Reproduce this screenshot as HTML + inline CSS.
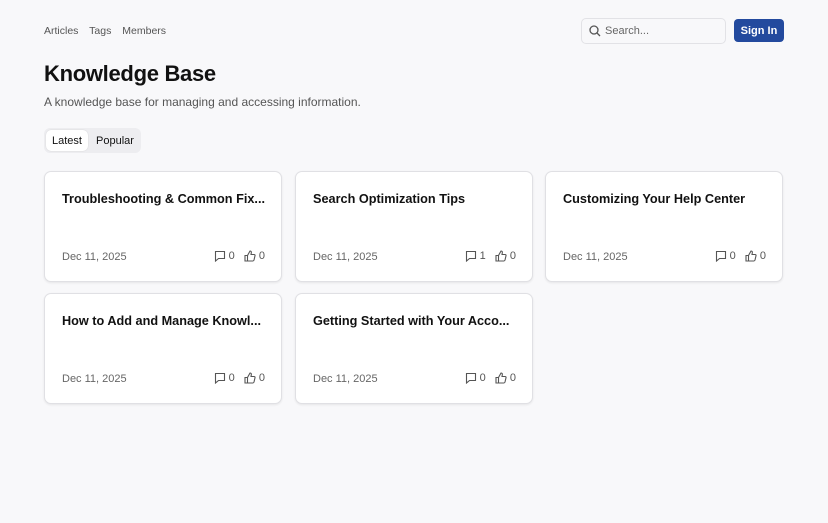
<!DOCTYPE html>
<html><head><style>
*{box-sizing:border-box;margin:0;padding:0}
body{width:828px;height:523px;background:#f8f8fa;font-family:"Liberation Sans",sans-serif;color:#111;position:relative;overflow:hidden}
.nav{position:absolute;top:25px;left:44px;font-size:10.5px;color:#555}
.nav span{margin-right:8px}
.search{position:absolute;left:581px;top:18px;width:145px;height:26px;border:1px solid #e2e2e6;border-radius:5px;background:#f8f8fa;font-size:11px;color:#666;padding:6px 0 0 23px}
.search svg{position:absolute;left:7px;top:6px}
.btn{position:absolute;left:734px;top:19px;width:50px;height:23px;background:#234a9e;border-radius:4px;color:#fff;font-size:11px;font-weight:bold;display:flex;align-items:center;justify-content:center}
h1{position:absolute;left:44px;top:61px;font-size:22px;font-weight:bold;letter-spacing:-0.3px}
.sub{position:absolute;left:44px;top:95px;font-size:12px;color:#555}
.tabs{position:absolute;left:44px;top:128px;width:97px;height:25px;background:#ededf0;border-radius:6px}
.tab{position:absolute;top:2px;height:21px;font-size:11px;line-height:22px;padding:0 6px}
.tab.a{left:2px;background:#fff;border-radius:5px;box-shadow:0 0 1px rgba(0,0,0,.2)}
.card{position:absolute;width:238px;height:111px;background:#fff;border:1px solid #e0e0e4;border-radius:7px;box-shadow:0 1px 2px rgba(0,0,0,.08)}
.t{position:absolute;left:17px;top:20px;font-size:12.7px;font-weight:bold;white-space:nowrap}
.d{position:absolute;left:17px;top:79px;font-size:11px;color:#666}
.m{position:absolute;right:16px;top:78px;font-size:11px;color:#555;display:flex;align-items:center;gap:3px}
.m svg{display:block}
</style></head><body>
<div class="nav"><span>Articles</span> <span>Tags</span> <span>Members</span></div>
<div class="search"><svg width="12" height="12" viewBox="0 0 12 12" fill="none" stroke="#555" stroke-width="1.3"><circle cx="5" cy="5" r="4"/><path d="M8 8l3 3"/></svg>Search...</div>
<div class="btn">Sign In</div>
<h1>Knowledge Base</h1>
<div class="sub">A knowledge base for managing and accessing information.</div>
<div class="tabs"><div class="tab a">Latest</div><div class="tab" style="left:46px">Popular</div></div>
<div class="card" style="left:44px;top:171px"><div class="t">Troubleshooting &amp; Common Fix...</div><div class="d">Dec 11, 2025</div><div class="m">
<svg width="12" height="12" viewBox="0 0 12 12" fill="none" stroke="#555" stroke-width="1.1"><path d="M1.5 1.5h9v7h-6l-3 2.5z"/></svg>0&nbsp;&nbsp;<svg width="12" height="12" viewBox="0 0 12 12" fill="none" stroke="#555" stroke-width="1.1"><path d="M1 5.5h2.5v5.5H1zM3.5 5.5L6 1c1 0 1.5.7 1.3 1.8L7 4.5h3c.8 0 1.2.6 1 1.3l-1 4.2c-.2.6-.5 1-1.1 1H3.5"/></svg>0</div></div>
<div class="card" style="left:295px;top:171px"><div class="t">Search Optimization Tips</div><div class="d">Dec 11, 2025</div><div class="m">
<svg width="12" height="12" viewBox="0 0 12 12" fill="none" stroke="#555" stroke-width="1.1"><path d="M1.5 1.5h9v7h-6l-3 2.5z"/></svg>1&nbsp;&nbsp;<svg width="12" height="12" viewBox="0 0 12 12" fill="none" stroke="#555" stroke-width="1.1"><path d="M1 5.5h2.5v5.5H1zM3.5 5.5L6 1c1 0 1.5.7 1.3 1.8L7 4.5h3c.8 0 1.2.6 1 1.3l-1 4.2c-.2.6-.5 1-1.1 1H3.5"/></svg>0</div></div>
<div class="card" style="left:545px;top:171px"><div class="t">Customizing Your Help Center</div><div class="d">Dec 11, 2025</div><div class="m">
<svg width="12" height="12" viewBox="0 0 12 12" fill="none" stroke="#555" stroke-width="1.1"><path d="M1.5 1.5h9v7h-6l-3 2.5z"/></svg>0&nbsp;&nbsp;<svg width="12" height="12" viewBox="0 0 12 12" fill="none" stroke="#555" stroke-width="1.1"><path d="M1 5.5h2.5v5.5H1zM3.5 5.5L6 1c1 0 1.5.7 1.3 1.8L7 4.5h3c.8 0 1.2.6 1 1.3l-1 4.2c-.2.6-.5 1-1.1 1H3.5"/></svg>0</div></div>
<div class="card" style="left:44px;top:293px"><div class="t">How to Add and Manage Knowl...</div><div class="d">Dec 11, 2025</div><div class="m">
<svg width="12" height="12" viewBox="0 0 12 12" fill="none" stroke="#555" stroke-width="1.1"><path d="M1.5 1.5h9v7h-6l-3 2.5z"/></svg>0&nbsp;&nbsp;<svg width="12" height="12" viewBox="0 0 12 12" fill="none" stroke="#555" stroke-width="1.1"><path d="M1 5.5h2.5v5.5H1zM3.5 5.5L6 1c1 0 1.5.7 1.3 1.8L7 4.5h3c.8 0 1.2.6 1 1.3l-1 4.2c-.2.6-.5 1-1.1 1H3.5"/></svg>0</div></div>
<div class="card" style="left:295px;top:293px"><div class="t">Getting Started with Your Acco...</div><div class="d">Dec 11, 2025</div><div class="m">
<svg width="12" height="12" viewBox="0 0 12 12" fill="none" stroke="#555" stroke-width="1.1"><path d="M1.5 1.5h9v7h-6l-3 2.5z"/></svg>0&nbsp;&nbsp;<svg width="12" height="12" viewBox="0 0 12 12" fill="none" stroke="#555" stroke-width="1.1"><path d="M1 5.5h2.5v5.5H1zM3.5 5.5L6 1c1 0 1.5.7 1.3 1.8L7 4.5h3c.8 0 1.2.6 1 1.3l-1 4.2c-.2.6-.5 1-1.1 1H3.5"/></svg>0</div></div>
</body></html>
